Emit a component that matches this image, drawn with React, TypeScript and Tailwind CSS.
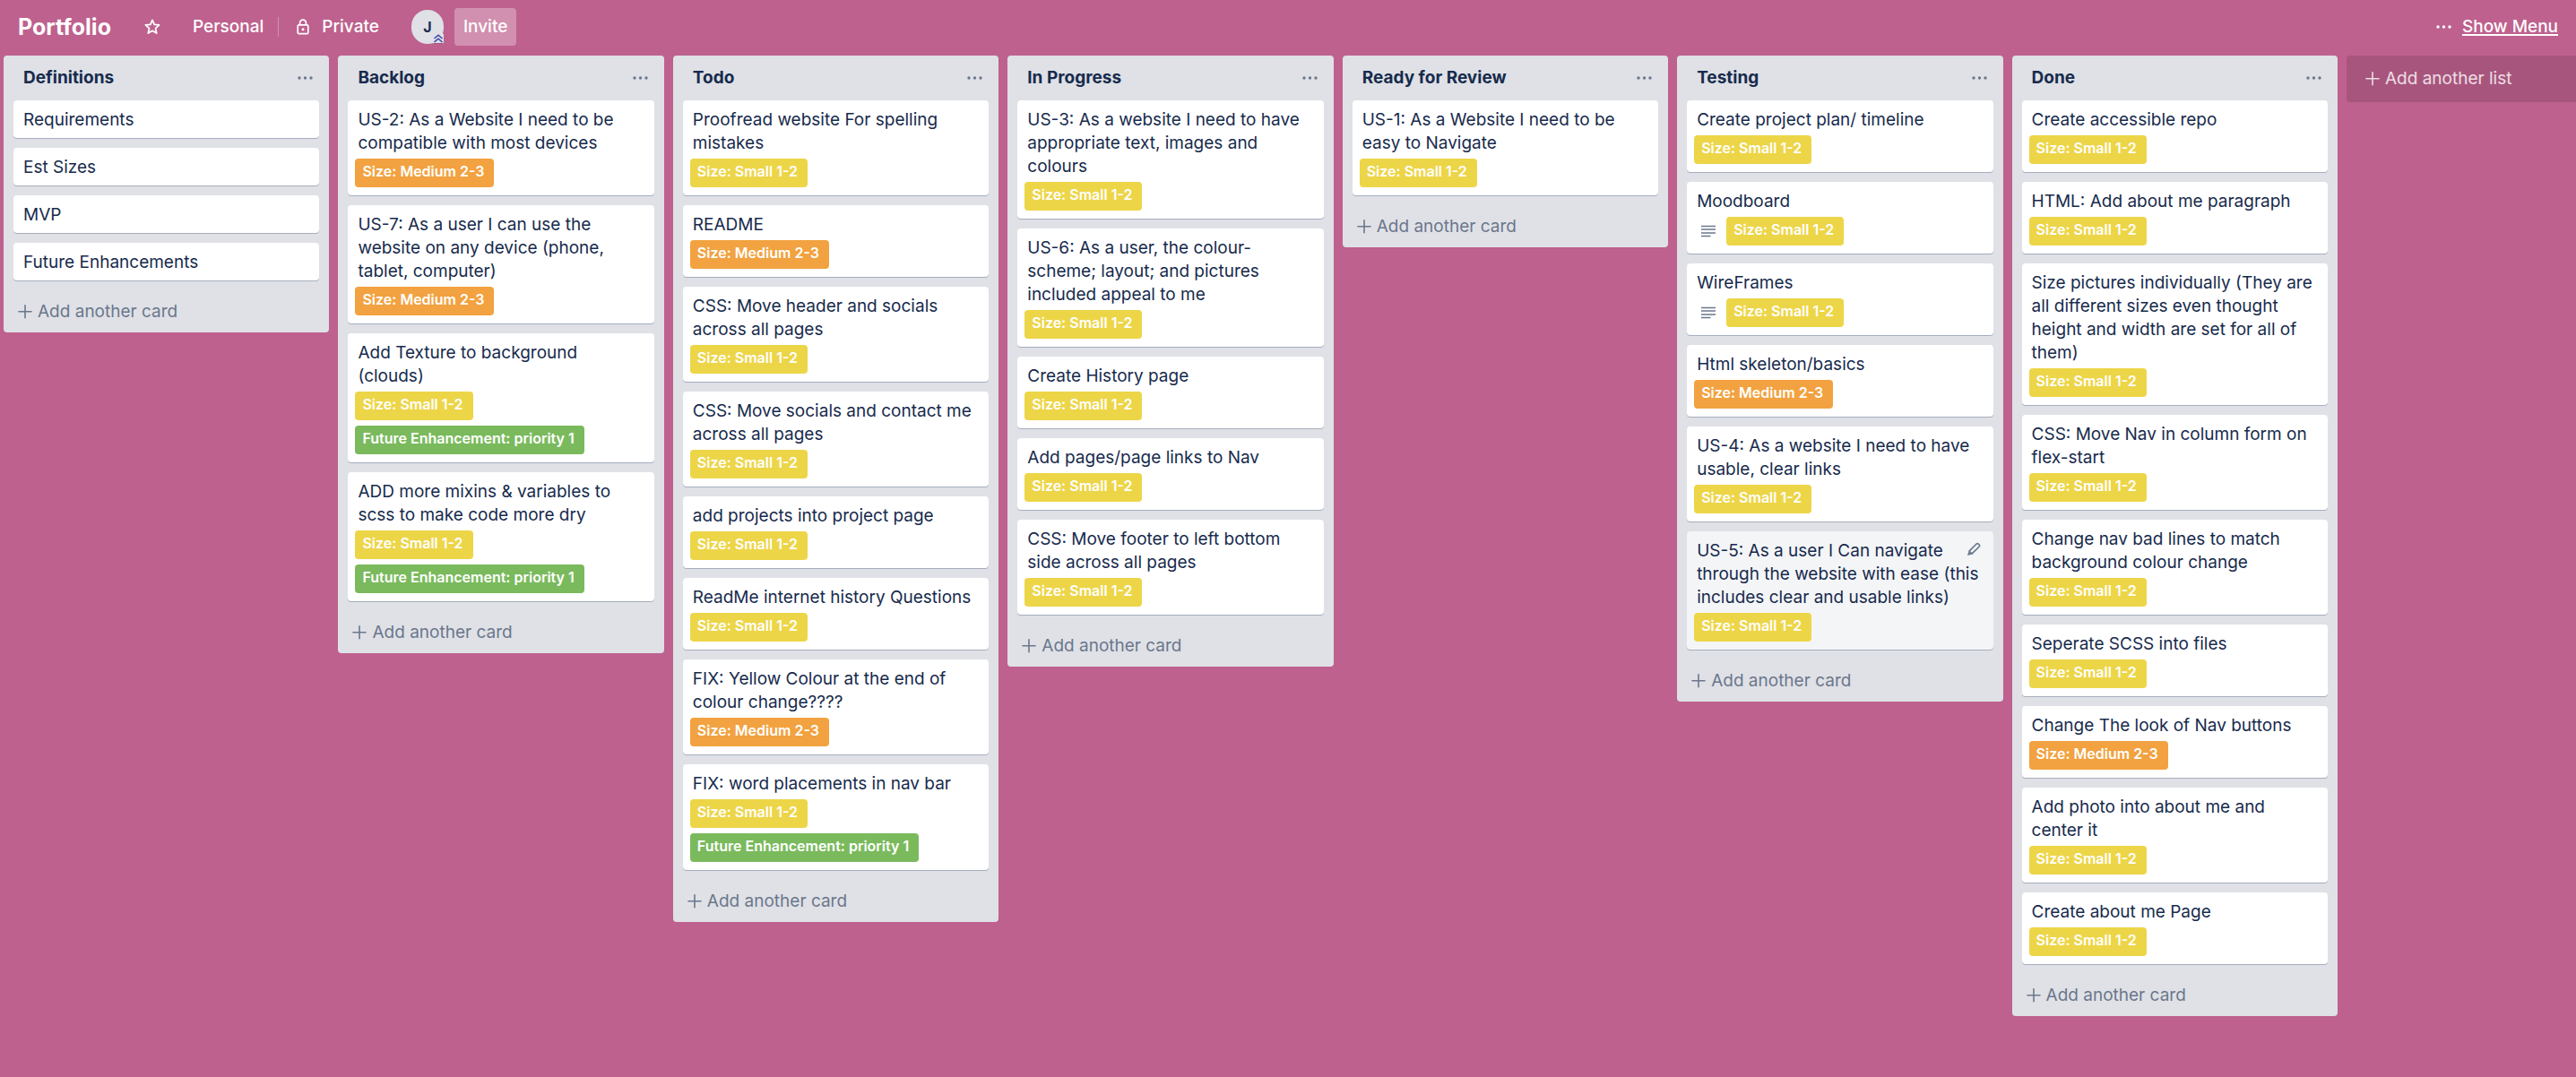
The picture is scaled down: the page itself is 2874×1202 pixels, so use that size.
type Label = "small" | "medium" | "future";
type CardData = { title: string; labels?: Label[]; description?: boolean; hovered?: boolean };
type ListData = { name: string; cards: CardData[] };

const LABELS: Record<Label, { text: string; color: string }> = {
  small: { text: "Size: Small 1-2", color: "bg-[#edd548]" },
  medium: { text: "Size: Medium 2-3", color: "bg-[#f2a240]" },
  future: { text: "Future Enhancement: priority 1", color: "bg-[#7aba5d]" },
};

const LISTS: ListData[] = [
  {
    name: "Definitions",
    cards: [{ title: "Requirements" }, { title: "Est Sizes" }, { title: "MVP" }, { title: "Future Enhancements" }],
  },
  {
    name: "Backlog",
    cards: [
      { title: "US-2: As a Website I need to be compatible with most devices", labels: ["medium"] },
      { title: "US-7: As a user I can use the website on any device (phone, tablet, computer)", labels: ["medium"] },
      { title: "Add Texture to background (clouds)", labels: ["small", "future"] },
      { title: "ADD more mixins & variables to scss to make code more dry", labels: ["small", "future"] },
    ],
  },
  {
    name: "Todo",
    cards: [
      { title: "Proofread website For spelling mistakes", labels: ["small"] },
      { title: "README", labels: ["medium"] },
      { title: "CSS: Move header and socials across all pages", labels: ["small"] },
      { title: "CSS: Move socials and contact me across all pages", labels: ["small"] },
      { title: "add projects into project page", labels: ["small"] },
      { title: "ReadMe internet history Questions", labels: ["small"] },
      { title: "FIX: Yellow Colour at the end of colour change????", labels: ["medium"] },
      { title: "FIX: word placements in nav bar", labels: ["small", "future"] },
    ],
  },
  {
    name: "In Progress",
    cards: [
      { title: "US-3: As a website I need to have appropriate text, images and colours", labels: ["small"] },
      { title: "US-6: As a user, the colour-scheme; layout; and pictures included appeal to me", labels: ["small"] },
      { title: "Create History page", labels: ["small"] },
      { title: "Add pages/page links to Nav", labels: ["small"] },
      { title: "CSS: Move footer to left bottom side across all pages", labels: ["small"] },
    ],
  },
  {
    name: "Ready for Review",
    cards: [{ title: "US-1: As a Website I need to be easy to Navigate", labels: ["small"] }],
  },
  {
    name: "Testing",
    cards: [
      { title: "Create project plan/ timeline", labels: ["small"] },
      { title: "Moodboard", labels: ["small"], description: true },
      { title: "WireFrames", labels: ["small"], description: true },
      { title: "Html skeleton/basics", labels: ["medium"] },
      { title: "US-4: As a website I need to have usable, clear links", labels: ["small"] },
      {
        title: "US-5: As a user I Can navigate through the website with ease (this includes clear and usable links)",
        labels: ["small"],
        hovered: true,
      },
    ],
  },
  {
    name: "Done",
    cards: [
      { title: "Create accessible repo", labels: ["small"] },
      { title: "HTML: Add about me paragraph", labels: ["small"] },
      {
        title: "Size pictures individually (They are all different sizes even thought height and width are set for all of them)",
        labels: ["small"],
      },
      { title: "CSS: Move Nav in column form on flex-start", labels: ["small"] },
      { title: "Change nav bad lines to match background colour change", labels: ["small"] },
      { title: "Seperate SCSS into files", labels: ["small"] },
      { title: "Change The look of Nav buttons", labels: ["medium"] },
      { title: "Add photo into about me and center it", labels: ["small"] },
      { title: "Create about me Page", labels: ["small"] },
    ],
  },
];

function Dots() {
  return (
    <svg width="17" height="6" viewBox="0 0 17 6" fill="currentColor" aria-hidden="true">
      <circle cx="2" cy="3" r="1.7" />
      <circle cx="8.5" cy="3" r="1.7" />
      <circle cx="15" cy="3" r="1.7" />
    </svg>
  );
}

function PlusMark() {
  return (
    <svg width="16" height="16" viewBox="0 0 16 16" fill="none" stroke="currentColor" strokeWidth="1.6" strokeLinecap="round" aria-hidden="true">
      <path d="M8 0.8v14M1 7.8h14" />
    </svg>
  );
}

function DescriptionMark() {
  return (
    <svg width="16" height="14" viewBox="0 0 16 14" fill="none" stroke="currentColor" strokeWidth="1.7" aria-hidden="true">
      <path d="M0 1.5h16M0 5h16M0 9h16M0 12.5h10.5" />
    </svg>
  );
}

function StarMark() {
  return (
    <svg width="18" height="18" viewBox="0 0 18 18" fill="none" stroke="currentColor" strokeWidth="1.8" strokeLinejoin="round" aria-hidden="true">
      <path d="M9 1.4l2.2 5 5.4.5-4.1 3.7 1.2 5.5L9 13.3l-4.7 2.8 1.2-5.5L1.4 6.9l5.4-.5z" />
    </svg>
  );
}

function LockMark() {
  return (
    <svg width="14" height="18" viewBox="0 0 14 18" fill="none" stroke="currentColor" strokeWidth="1.7" aria-hidden="true">
      <rect x="1.2" y="6.8" width="11.6" height="9.8" rx="1.4" />
      <path d="M3.6 6.8V4.6a3.4 3.4 0 0 1 6.8 0v2.2" />
      <circle cx="7" cy="11.7" r="1.5" fill="currentColor" stroke="none" />
    </svg>
  );
}

function PencilMark() {
  return (
    <svg width="16" height="16" viewBox="0 0 16 16" fill="none" stroke="currentColor" strokeWidth="1.7" strokeLinejoin="round" aria-hidden="true">
      <path d="M3 10.2 11.2 2a1.4 1.4 0 0 1 2 0l1 1a1.4 1.4 0 0 1 0 2L6 13.2z" />
      <path d="M2.4 10.6l3.1 3.1L1 15z" fill="currentColor" stroke="none" />
    </svg>
  );
}

function AdminMark() {
  return (
    <svg width="12" height="12" viewBox="0 0 12 12" fill="none" aria-hidden="true">
      <rect width="12" height="12" rx="2" fill="#dfe1e6" />
      <path d="M1.5 6L6 2.2 10.5 6M1.5 10L6 6.2 10.5 10" stroke="#3f46a8" strokeWidth="1.6" />
      <path d="M1 11.5h10" stroke="#a5587f" />
    </svg>
  );
}

function Card({ card }: { card: CardData }) {
  return (
    <li
      className={`relative rounded-[4px] px-[11px] pt-[9px] text-[#172b4d] shadow-[0_1px_0_#a5adbd] ${card.hovered ? "bg-[#f4f5f7]" : "bg-white"}`}
    >
      <p className={card.labels ? "" : "pb-[7px]"}>{card.title}</p>
      {card.labels && (
        <div className="-ml-[3px] flex items-start pt-1 pb-[9px]">
          {card.description && (
            <span className="flex h-8 w-9 shrink-0 items-center pl-2 text-[#6b778c]">
              <DescriptionMark />
            </span>
          )}
          <div className="flex flex-col items-start gap-[6px]">
            {card.labels.map((l) => (
              <span key={l} className={`h-8 rounded-[4px] pr-[11px] pl-2 text-[16px] leading-[29px] font-semibold whitespace-nowrap text-white ${LABELS[l].color}`}>
                {LABELS[l].text}
              </span>
            ))}
          </div>
        </div>
      )}
      {card.hovered && (
        <button type="button" aria-label="Edit card" className="absolute top-3 right-[14px] text-[#6b778c]">
          <PencilMark />
        </button>
      )}
    </li>
  );
}

function List({ list }: { list: ListData }) {
  return (
    <section className="rounded-[4px] bg-[#dfe1e6] px-[11px]">
      <header className="flex h-[50px] items-center justify-between pr-[7px] pl-[11px]">
        <h2 className="font-bold text-[#172b4d]">{list.name}</h2>
        <button type="button" aria-label={`${list.name} actions`} className="text-[#6b778c]">
          <Dots />
        </button>
      </header>
      <ul className="flex flex-col gap-[11px]">
        {list.cards.map((card) => (
          <Card key={card.title} card={card} />
        ))}
      </ul>
      <button type="button" className="mt-[14px] mb-[2px] flex h-[42px] w-full items-center gap-[6px] pl-[5px] text-[#6b778c]">
        <PlusMark />
        Add another card
      </button>
    </section>
  );
}

export default function App() {
  return (
    <div className="flex min-h-screen flex-col bg-[#be618e] font-['Inter',sans-serif] text-[19px] leading-[26px]">
      <header className="flex h-[62px] items-center pr-5 pb-[3px] pl-5 font-medium text-white">
        <h1 className="text-[25px] font-bold">Portfolio</h1>
        <button type="button" aria-label="Star board" className="ml-[37px]">
          <StarMark />
        </button>
        <button type="button" className="ml-9">Personal</button>
        <span className="mr-5 ml-4 h-[22px] w-px bg-white/30" />
        <button type="button" className="flex items-center gap-[14px]">
          <LockMark />
          Private
        </button>
        <button type="button" aria-label="Member J" className="relative ml-9 flex h-[38px] w-9 items-center justify-center rounded-full bg-[#dfe1e6] text-base font-bold text-[#172b4d]">
          J
          <span className="absolute right-0 bottom-0">
            <AdminMark />
          </span>
        </button>
        <button type="button" className="ml-3 h-[42px] rounded-[4px] bg-white/30 px-[10px]">Invite</button>
        <a href="#menu" className="ml-auto flex items-center gap-3">
          <Dots />
          <span className="underline decoration-2 underline-offset-2">Show Menu</span>
        </a>
      </header>
      <main className="grid grid-cols-[repeat(7,minmax(0,1fr))_256px] items-start gap-[10px] pl-1">
        {LISTS.map((list) => (
          <List key={list.name} list={list} />
        ))}
        <button type="button" className="flex h-[52px] items-center gap-[6px] rounded-l-[4px] bg-[#a8557d] pl-[21px] text-white/80">
          <PlusMark />
          Add another list
        </button>
      </main>
    </div>
  );
}
